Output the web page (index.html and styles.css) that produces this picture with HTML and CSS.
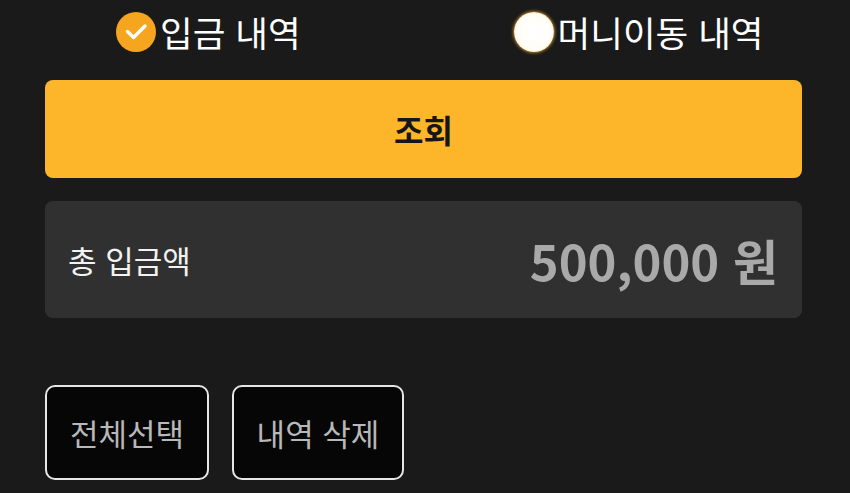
FILE: index.html
```html
<!DOCTYPE html>
<html lang="ko">
<head>
<meta charset="utf-8">
<title>입금 내역</title>
<link rel="stylesheet" href="styles.css">
</head>
<body>
<main class="page">
  <div class="tabs">
    <label class="tab">
      <span class="dot dot-on">
        <svg viewBox="0 0 40 40" width="40" height="40"><path d="M11.5 19.5 L17.5 25.5 L29 14" fill="none" stroke="#fff" stroke-width="3.4" stroke-linecap="round" stroke-linejoin="round"/></svg>
      </span>
      <span class="tab-text">입금 내역</span>
    </label>
    <label class="tab">
      <span class="dot dot-off"></span>
      <span class="tab-text">머니이동 내역</span>
    </label>
  </div>

  <button class="search">조회</button>

  <section class="total">
    <span class="total-label">총 입금액</span>
    <span class="total-value">500,000 원</span>
  </section>

  <div class="actions">
    <button class="action">전체선택</button>
    <button class="action action-wide">내역 삭제</button>
  </div>
</main>
</body>
</html>
```

FILE: styles.css
```css
html, body {
  margin: 0;
  padding: 0;
  background: #1a1a1a;
}

body {
  font-family: "Noto Sans CJK KR", "Noto Sans", sans-serif;
  color: #fff;
  width: 850px;
  height: 493px;
  overflow: hidden;
}

.page {
  padding: 0 48px 0 45px;
  display: flex;
  flex-direction: column;
}

.tabs {
  height: 64px;
  display: flex;
  align-items: center;
  padding-left: 71px;
  gap: 213px;
  margin-bottom: 16px;
}

.tab {
  display: flex;
  align-items: center;
  gap: 4px;
}

.dot {
  width: 40px;
  height: 40px;
  border-radius: 50%;
  display: flex;
  align-items: center;
  justify-content: center;
  box-sizing: border-box;
}

.dot-on {
  background: #f6a51e;
}

.dot-off {
  background: radial-gradient(circle, #ffffff 0%, #fffdf6 62%, #fbe7b4 78%, #e4a12a 95%);
  box-shadow: 0 0 3px 1px rgba(230, 160, 40, 0.75);
}

.tab-text {
  font-size: 35.5px;
  line-height: 40px;
  color: #fff;
}

.search {
  height: 98px;
  border: none;
  border-radius: 8px;
  background: #fdb62a;
  color: #161616;
  font-family: inherit;
  font-size: 32px;
  font-weight: 700;
  padding: 0;
  margin: 0 0 23px;
}

.total {
  height: 117px;
  border-radius: 8px;
  background: #303030;
  display: flex;
  align-items: center;
  justify-content: space-between;
  padding: 0 24px 0 23px;
  box-sizing: border-box;
}

.total-label {
  font-size: 31px;
  color: #f2f2f2;
}

.total-value {
  font-size: 49px;
  font-weight: 700;
  color: #a9a9a9;
}

.actions {
  margin-top: 67px;
  display: flex;
  gap: 23px;
}

.action {
  width: 164px;
  height: 95px;
  background: #060606;
  border: 2px solid #e6e6e6;
  border-radius: 10px;
  color: #b8b8b8;
  font-family: inherit;
  font-size: 31px;
  padding: 0;
}

.action-wide {
  width: 172px;
}
```
